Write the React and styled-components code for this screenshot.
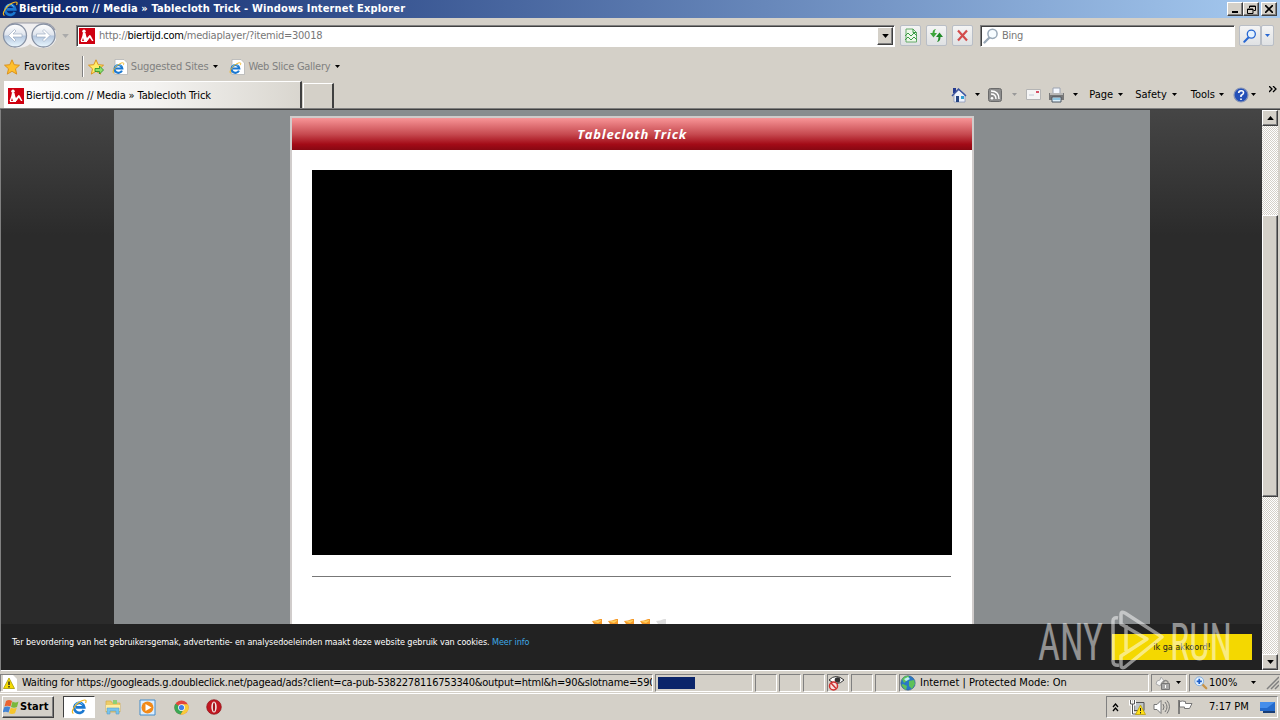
import React from 'react';
import styled, { createGlobalStyle } from 'styled-components';

const face = '#d4d0c8';

// ============================================
// STYLED COMPONENTS
// ============================================
const GlobalStyle = createGlobalStyle`
  * { box-sizing: border-box; }
  body {
    margin: 0;
    overflow: hidden;
    font-family: 'DejaVu Sans Condensed', 'DejaVu Sans', sans-serif;
    font-stretch: condensed;
    font-size: 11px;
    color: #000;
  }
  svg { display: block; flex: none; }
`;

const Screen = styled.div`
  width: 1280px;
  height: 720px;
  display: flex;
  flex-direction: column;
  background: ${face};
  overflow: hidden;
`;

const Label = styled.span`
  flex: none;
  white-space: pre;
  line-height: 14px;
  font-size: ${(p) => p.$size || 11}px;
  letter-spacing: ${(p) => p.$spacing || 0}px;
  color: ${(p) => p.$color || 'inherit'};
  margin-left: ${(p) => p.$left || 0}px;
  font-weight: ${(p) => (p.$bold ? 700 : 400)};
`;

const TitleBar = styled.header`
  height: 18px;
  flex: none;
  display: flex;
  align-items: center;
  padding: 0 3px 0 2px;
  color: #fff;
  background: linear-gradient(90deg, #0a246a, #a6caf0);
`;

const Caption = styled.div`
  margin-left: auto;
  display: flex;
`;

const CaptionButton = styled.span`
  width: 16px;
  height: 14px;
  display: grid;
  place-items: center;
  margin-left: ${(p) => p.$gap || 0}px;
  background: ${face};
  border: 1px solid;
  border-color: #fff #404040 #404040 #fff;
  box-shadow: inset -1px -1px #808080;
`;

const AddressRow = styled.div`
  height: 35px;
  flex: none;
  display: flex;
  align-items: center;
  padding: 0 6px 0 2px;
`;

const Field = styled.div`
  height: 22px;
  width: ${(p) => p.$width}px;
  margin-left: ${(p) => p.$left}px;
  display: flex;
  align-items: center;
  background: #fff;
  border: 1px solid;
  border-color: #808080 #fff #fff #808080;
  box-shadow: inset 1px 1px #404040;
  padding: 1px 1px 1px 2px;
`;

const DropButton = styled.span`
  width: 16px;
  height: 18px;
  margin-left: auto;
  display: grid;
  place-items: center;
  background: ${face};
  border: 1px solid;
  border-color: #fff #404040 #404040 #fff;
  box-shadow: inset -1px -1px #808080;
`;

const ToolButton = styled.span`
  width: ${(p) => p.$width || 21}px;
  height: 21px;
  margin-left: ${(p) => p.$left || 0}px;
  display: grid;
  place-items: center;
  background: linear-gradient(#f4f4f4, #dfe1e3);
  border: 1px solid #b9bec6;
  border-radius: 2px;
`;

const FavoritesRow = styled.div`
  height: 27px;
  flex: none;
  display: flex;
  align-items: center;
  padding-left: 4px;
`;

const Divider = styled.span`
  width: 2px;
  height: 21px;
  margin: 0 4px 0 12px;
  border-left: 1px solid #808080;
  border-right: 1px solid #fff;
`;

const TabRow = styled.div`
  height: 29px;
  flex: none;
  display: flex;
  align-items: flex-end;
  padding-left: 4px;
  border-bottom: 1px solid #808080;
`;

const Tab = styled.div`
  width: ${(p) => p.$width}px;
  height: ${(p) => p.$height}px;
  display: flex;
  align-items: center;
  padding: 2px 0 0 3px;
  margin-right: 1px;
  background: ${(p) => (p.$active ? 'linear-gradient(90deg, #fff, #f4f3f1 50%, #d9d6cf)' : face)};
  border: 1px solid #fff;
  border-bottom: none;
  border-right: 2px solid #404040;
`;

const CommandBar = styled.div`
  flex: 1;
  align-self: stretch;
  display: flex;
  align-items: center;
  justify-content: flex-end;
  padding: 1px 3px 0 0;
`;

const Gap = styled.span`
  flex: none;
  width: ${(p) => p.$width}px;
`;

const Viewport = styled.div`
  height: 562px;
  flex: none;
  display: flex;
  border-left: 1px solid #808080;
  border-top: 1px solid #404040;
  border-bottom: 1px solid #fff;
`;

const Page = styled.main`
  width: 1261px;
  display: flex;
  flex-direction: column;
  background: linear-gradient(#454545, #2b2b2b 125px);
`;

const Backdrop = styled.div`
  width: 1036px;
  height: 514px;
  margin-left: 113px;
  padding: 6px 0 0 176px;
  background: #898d8f;
`;

const Player = styled.section`
  width: 684px;
  height: 508px;
  display: flex;
  flex-direction: column;
  align-items: center;
  background: #fff;
  border: 2px solid #d0cccb;
  border-bottom: none;
`;

const PlayerTitle = styled.h1`
  align-self: stretch;
  height: 32px;
  margin: 0 0 20px;
  text-align: center;
  color: #fff;
  font: italic 700 13px/32px 'Open Sans', sans-serif;
  letter-spacing: 0.75px;
  background: linear-gradient(#f89597, #c74b51 50%, #a30b17 82%, #870812);
`;

const Video = styled.div`
  width: 640px;
  height: 385px;
  background: #000;
`;

const Rule = styled.div`
  width: 639px;
  height: 1px;
  margin: 21px 1px 42px 0;
  background: #777;
`;

const Stars = styled.div`
  display: flex;
  gap: 4px;
  height: 5px;
  margin-left: -6px;
  overflow: hidden;
`;

const CookieBar = styled.footer`
  flex: 1;
  display: flex;
  align-items: flex-start;
  padding: 10px 10px 0 11px;
  background: #222;
  color: #fff;
`;

const CookieText = styled.p`
  margin: 1px 0 0;
  line-height: 14px;
  font-size: 9px;
  letter-spacing: -0.08px;
  white-space: pre;
`;

const MoreInfo = styled.a`
  color: #3fa9e5;
`;

const AcceptButton = styled.span`
  width: 140px;
  height: 26px;
  margin-left: auto;
  display: grid;
  place-items: center;
  color: #222;
  background: #f4d800;
`;

const ScrollBar = styled.div`
  width: 16px;
  display: flex;
  flex-direction: column;
  background: repeating-conic-gradient(#fff 0 25%, ${face} 0 50%) 0 0 / 2px 2px;
`;

const ScrollPart = styled.span`
  height: ${(p) => p.$height}px;
  flex: none;
  display: grid;
  place-items: center;
  background: ${face};
  border: 1px solid;
  border-color: #fff #404040 #404040 #fff;
  box-shadow: inset -1px -1px #808080;
`;

const TrackSpace = styled.span`
  flex: ${(p) => p.$grow} 0 0;
`;

const StatusBar = styled.div`
  height: 23px;
  flex: none;
  display: flex;
  align-items: center;
  padding: 2px 0 1px;
  border-bottom: 1px solid #fff;
`;

const StatusCell = styled.div`
  width: ${(p) => p.$width}px;
  height: 18px;
  flex: none;
  display: flex;
  align-items: center;
  margin-right: ${(p) => p.$right ?? 2}px;
  padding-left: ${(p) => p.$pad ?? 2}px;
  overflow: hidden;
  border: 1px solid;
  border-color: #808080 #fff #fff #808080;
`;

const Progress = styled.span`
  width: 37px;
  height: 12px;
  background: #0a246a;
`;

const TaskBar = styled.div`
  flex: 1;
  display: flex;
  align-items: center;
  padding: 1px 0 1px 2px;
`;

const StartButton = styled.div`
  width: 52px;
  height: 22px;
  display: flex;
  align-items: center;
  border: 1px solid;
  border-color: #fff #404040 #404040 #fff;
  box-shadow: inset -1px -1px #808080;
`;

const TaskItem = styled.div`
  width: 32px;
  height: 22px;
  margin-left: ${(p) => p.$left || 2}px;
  display: grid;
  place-items: center;
  background: ${(p) => (p.$active ? '#fff' : 'transparent')};
  border: 1px solid;
  border-color: ${(p) => (p.$active ? '#404040 #fff #fff #404040' : 'transparent')};
`;

const Tray = styled.div`
  width: 172px;
  height: 22px;
  margin: 0 2px 0 auto;
  display: flex;
  align-items: center;
  padding-left: 5px;
  border: 1px solid;
  border-color: #808080 #fff #fff #808080;
`;

const Watermark = styled.div`
  position: absolute;
  left: 1038px;
  top: 608px;
  opacity: 0.5;
`;

const WatermarkText = styled.text`
  font-family: Roboto, sans-serif;
  font-size: 52px;
  fill: #fff;
`;

// ============================================
// ICONS
// ============================================
const Arrow = ({ color = '#000', up, size = 5 }) => (
  <svg width={size} height={(size + 1) / 2} viewBox="0 0 10 6">
    <path d={up ? 'M0 6 5 0l5 6z' : 'M0 0h10L5 6z'} fill={color} />
  </svg>
);

const IeIcon = ({ size = 16, page }) => (
  <svg width={size} height={size} viewBox="0 0 16 16">
    {page && <path d="M3 .5h9l3.500 3.500v11.500H3z" fill="#fff" stroke="#b4b4b4" strokeWidth=".8" />}
    <g transform={page ? 'translate(0 3) scale(.78)' : undefined}>
      <path d="M12.800 11A5 5 0 1 1 13.200 8.300H5" fill="none" stroke="#1b78d0" strokeWidth="2.700" />
      <path d="M11.500 5.500A4 4 0 0 0 4 6.500" fill="none" stroke="#6fc4f7" strokeWidth="1" />
      <path d="M2.500 14.500C-1 13.500 4 4.500 11.500 1.500c4-1.500 4 .5 3 2.500" fill="none" stroke="#f0b51e" strokeWidth="1.200" />
    </g>
  </svg>
);

const SiteIcon = () => (
  <svg width="16" height="16" viewBox="0 0 16 16">
    <path d="M0 0h16v16H0z" fill="#cf0010" />
    <circle cx="5" cy="3.300" r="1.700" fill="#fff" />
    <path d="M4 4.500 6.500 5l.8 3.500L8 10l2.500-3 1.200.5 2.800 5.500h-1.500l-2.200-3.300L8.500 13H5l-1-3-1 3H1.500l1.800-5z" fill="#fff" />
    <path d="M2 13.500h6" stroke="#fff" />
  </svg>
);

const NavButtons = () => (
  <svg width="56" height="27" viewBox="0 0 56 27">
    <defs>
      <linearGradient id="orb" x2="0" y2="1">
        <stop stopColor="#fff" />
        <stop offset=".48" stopColor="#dfe4ed" />
        <stop offset=".52" stopColor="#b4c6de" />
        <stop offset="1" stopColor="#eaf8ff" />
      </linearGradient>
    </defs>
    <path d="M2 10Q5 1 13 1h29q9 0 12 9v8q-4 8-12 8-10 0-14-4-4 4-14 4-8 0-12-8z" fill="#f0eff0" />
    <path d="M3 8Q7 1 13 1h29q7 0 11 7" fill="none" stroke="#999ba8" strokeWidth="1.200" />
    <circle cx="13" cy="13.500" r="11.500" fill="url(#orb)" stroke="#8791a3" strokeWidth="1.300" />
    <circle cx="41.500" cy="13.500" r="11.500" fill="url(#orb)" stroke="#8791a3" strokeWidth="1.300" />
    <path d="m12.500 7.500-6 6 6 6 1.500-1.500-3-3h9v-3h-9l3-3zM42 7.500l6 6-6 6-1.500-1.500 3-3h-9v-3h9l-3-3z" fill="#fff" stroke="#92a2ba" strokeWidth=".6" />
  </svg>
);

const StarIcon = ({ add }) => (
  <svg width="16" height="16" viewBox="0 0 16 16">
    <path d="m8 .8 2.200 4.900 5.300.5-4 3.600 1.200 5.300L8 12.300l-4.700 2.800 1.200-5.300-4-3.600 5.300-.5z" fill={add ? '#ffec68' : '#ffc02d'} stroke="#d98c13" strokeWidth=".9" />
    {add && <path d="M7 9.500h4.500V7l4 4-4 4v-2.500H7z" fill="#8ee06c" stroke="#278d25" strokeWidth=".8" />}
  </svg>
);

const RatingStar = ({ gray }) => (
  <svg width="12" height="5" viewBox="0 0 12 5">
    <path d="M1 2 5 1.500 9 0h2v5H3z" fill={gray ? '#ddd' : '#f59a2a'} />
    {!gray && <path d="M2 2.500 10 1v1L7 4z" fill="#ffd05b" />}
  </svg>
);

const Lens = ({ color = '#2767d2', fill = '#e4f2ff', size = 16, plus }) => (
  <svg width={size} height={size} viewBox="0 0 16 16">
    {plus ? (
      <g>
        <path d="m9 9 5 5" stroke="#c89347" strokeWidth="2.600" strokeLinecap="round" />
        <circle cx="6" cy="6" r="5" fill={fill} stroke="#78a8e0" />
        <path d="M6 3v6M3 6h6" stroke="#1d5ec8" strokeWidth="2" />
      </g>
    ) : (
      <g>
        <path d="m6.500 9.500-5 5" stroke={color} strokeWidth="2.300" strokeLinecap="round" />
        <circle cx="9.500" cy="5.800" r="4.600" fill={fill} stroke={color} strokeWidth="1.500" />
      </g>
    )}
  </svg>
);

const CompatIcon = () => (
  <svg width="14" height="15" viewBox="0 0 14 15">
    <path d="M2 1h7l3.500 3.500V14H2z" fill="#edf7e9" stroke="#64aa68" />
    <path d="M9 1v3.500h3.500M1 8l3-3 3 3 3-3 3 3M1 12l3-3 3 3 3-3 3 3" fill="none" stroke="#3b9b46" />
  </svg>
);

const RefreshIcon = () => (
  <svg width="15" height="15" viewBox="0 0 15 15">
    <path d="M7 1Q3.500 1.500 3.500 5H1l3.500 4.500L8 5H5.500q0-2.500 1.500-4z" fill="#3da63a" />
    <path d="M8 14q3.500-.5 3.500-5H14l-3.500-4.500L7 9h2.500q0 3-1.500 5z" fill="#218a28" />
  </svg>
);

const StopIcon = () => (
  <svg width="13" height="13" viewBox="0 0 13 13">
    <path d="m2 1.500 9 10m0-10-9 10" stroke="#d34b4b" strokeWidth="2.200" />
  </svg>
);

const HomeIcon = () => (
  <svg width="16" height="16" viewBox="0 0 16 16">
    <path d="M3 7v8h11V7L8 3z" fill="#eef2fa" stroke="#8290b5" strokeWidth=".7" />
    <path d="M2 1h3v5H2z" fill="#253b90" />
    <path d="m1 9 6.500-7L15 9" fill="none" stroke="#3c549f" strokeWidth="1.500" />
    <path d="M5 9h3v6H5z" fill="#254482" />
    <path d="M10 9h3v3h-3z" fill="#329ed2" />
  </svg>
);

const FeedIcon = () => (
  <svg width="14" height="14" viewBox="0 0 14 14">
    <rect x=".5" y=".5" width="13" height="13" rx="2" fill="#8d8d8d" stroke="#6b6b6b" />
    <circle cx="4" cy="10.300" r="1.300" fill="#fff" />
    <path d="M3 6q5 0 5 5M3 3q8 0 8 8" fill="none" stroke="#fff" strokeWidth="1.400" />
  </svg>
);

const MailIcon = () => (
  <svg width="15" height="11" viewBox="0 0 15 11">
    <path d="M.5.5h14v10H.5z" fill="#f5f5f5" stroke="#b4b4b4" />
    <path d="M10 2h3v2h-3z" fill="#d65268" />
    <path d="M3 6h5" stroke="#c1c8d4" />
  </svg>
);

const PrinterIcon = () => (
  <svg width="17" height="16" viewBox="0 0 17 16">
    <path d="M5 1h7v6H5z" fill="#f4f8ff" stroke="#9ba2b0" />
    <path d="M1 6h15v7H1z" fill="#777" />
    <path d="M2 6h13v2H2z" fill="#b8b8b8" />
    <path d="M4 10h9v5H4z" fill="#dff1fb" stroke="#4d5663" />
    <path d="M5 12h7" stroke="#3e9ccb" />
  </svg>
);

const HelpIcon = () => (
  <svg width="16" height="16" viewBox="0 0 16 16">
    <circle cx="8" cy="8" r="7" fill="#2450b8" stroke="#8794b5" strokeWidth="1.200" />
    <path d="M5.700 6q0-2.300 2.500-2.300T10.500 6Q10.500 7 8 8.500V10m0 1.500v1.500" fill="none" stroke="#fff" strokeWidth="1.600" />
  </svg>
);

const WarningIcon = () => (
  <svg width="16" height="16" viewBox="0 0 16 16">
    <path d="M1 0h10l4 4v12H1z" fill="#fff" />
    <path d="M7 3 12.500 13.500h-11z" fill="#f7dc00" stroke="#a79a00" strokeWidth=".8" />
    <path d="M7 6.500v3.500m0 1v1.500" stroke="#222" strokeWidth="1.400" />
  </svg>
);

const EyeIcon = () => (
  <svg width="17" height="16" viewBox="0 0 17 16">
    <path d="M1 5q7-7 15 0-7 7-15 0z" fill="#fff" stroke="#333" />
    <circle cx="9.500" cy="5" r="2.800" fill="#333" />
    <circle cx="5.500" cy="11" r="4" fill="#f7dede" stroke="#cf3030" strokeWidth="1.500" />
    <path d="m3 8 5 5.500" stroke="#cf3030" strokeWidth="1.500" />
  </svg>
);

const GlobeIcon = () => (
  <svg width="16" height="16" viewBox="0 0 16 16">
    <circle cx="8" cy="8" r="7.200" fill="#2878c5" stroke="#34577e" strokeWidth=".6" />
    <path d="M2 4q3-4 7-3l-1 4-4 3zM9 6l5-1 1 4-3 5-3-3zM3 9l4 2-1 4Q3 13 1.500 10z" fill="#5dc158" />
    <path d="m4 4 4-2 2 2-4 2z" fill="#bceef8" />
  </svg>
);

const LockIcon = () => (
  <svg width="16" height="16" viewBox="0 0 16 16">
    <path d="M1 9q0-4 4-4l1-3 4 5H7l-2 4z" fill="#f4f4f4" stroke="#aaa" />
    <path d="M8 9V7q2.500-3 5 0v2" fill="none" stroke="#888" strokeWidth="1.300" />
    <path d="M6.500 8.500h8v6h-8z" fill="#a9a9a9" stroke="#777" />
    <path d="M10.500 10v3" stroke="#fff" />
  </svg>
);

const WindowsIcon = () => (
  <svg width="17" height="16" viewBox="0 0 17 16">
    <path d="M3 2q3-2 6 0L7.500 7.500Q4 6 1.500 7.500z" fill="#eb6330" />
    <path d="M9.500 2.500q3 2 6 0l-1.500 5.500q-3 1.500-6 0z" fill="#7ab83e" />
    <path d="M1.200 8.200q3-1.500 6 0L5.500 13.500q-3-1.500-6 0z" fill="#4384d4" />
    <path d="M7.800 8.700q3 1.500 6 0L12 14.200q-3 1.500-6 0z" fill="#f6c52c" />
  </svg>
);

const FolderIcon = () => (
  <svg width="18" height="16" viewBox="0 0 18 16">
    <path d="M2 2h5l1 2h8v9H2z" fill="#edcc69" stroke="#d4ad45" strokeWidth=".7" />
    <path d="M9 1h4v4H9z" fill="#8ecf75" />
    <path d="M2 6h14v6H2z" fill="#ffeda0" />
    <path d="M3 15V9h12v6h-3v-3H6v3z" fill="#78c4ed" stroke="#5d9dca" strokeWidth=".6" />
  </svg>
);

const MediaIcon = () => (
  <svg width="17" height="17" viewBox="0 0 17 17">
    <path d="M1 1h15v15H1z" fill="#dceeff" stroke="#428ccb" />
    <circle cx="8.500" cy="8.500" r="6" fill="#f28a19" />
    <path d="m6.500 5 6 3.500-6 3.500z" fill="#fff" />
  </svg>
);

const ChromeIcon = () => (
  <svg width="15" height="15" viewBox="0 0 16 16">
    <circle cx="8" cy="8" r="7.500" fill="#e3453c" />
    <path d="M8 8 1.500 4A7.500 7.500 0 0 0 7 15.500L11 9z" fill="#3ba755" />
    <path d="M8 4.500h6.700A7.500 7.500 0 0 1 7 15.500L11 9z" fill="#f8cb39" />
    <circle cx="8" cy="8" r="3.600" fill="#fff" />
    <circle cx="8" cy="8" r="2.800" fill="#427ee8" />
  </svg>
);

const OperaIcon = () => (
  <svg width="16" height="16" viewBox="0 0 16 16">
    <circle cx="8" cy="8" r="7.300" fill="#c21721" stroke="#8d1117" strokeWidth=".7" />
    <ellipse cx="8" cy="8" rx="2.700" ry="5.500" fill="#f3e9e6" />
    <ellipse cx="8" cy="8" rx="1.100" ry="4.500" fill="#a3131b" />
  </svg>
);

const NetworkIcon = () => (
  <svg width="17" height="16" viewBox="0 0 17 16">
    <path d="M5 3.500h10v8H5z" fill="#bfc5c8" stroke="#555" />
    <path d="M1.500 1v4h4V1M3.500 5v10h7" fill="none" stroke="#fff" strokeWidth="3" />
    <path d="M1.500 1v4h4V1M3.500 5v10h7" fill="none" stroke="#555" />
    <path d="m11.500 6 5 9.500h-10z" fill="#ffdf15" stroke="#b49800" strokeWidth=".7" />
    <path d="M11.500 9v3m0 1v1.500" stroke="#222" />
  </svg>
);

const VolumeIcon = () => (
  <svg width="17" height="16" viewBox="0 0 17 16">
    <path d="M1 5.500h3l4-4v13l-4-4H1z" fill="#fff" stroke="#777" />
    <path d="M10 5q2 3 0 6M12 3q4 5 0 10M14 1.500q5 6 0 13" fill="none" stroke="#777" />
  </svg>
);

const FlagIcon = () => (
  <svg width="16" height="16" viewBox="0 0 16 16">
    <path d="M2.500 2.500q3-1 6 0v2h6.500l-2.500 5H7.500V8h-5z" fill="#fff" stroke="#777" />
    <path d="M2 1v14" stroke="#666" strokeWidth="1.500" />
  </svg>
);

// ============================================
// SECTIONS
// ============================================
const BrowserChrome = () => (
  <>
    <TitleBar>
      <IeIcon />
      <Label $bold $left={1} $spacing={0.145}>Biertijd.com // Media » Tablecloth Trick - Windows Internet Explorer</Label>
      <Caption>
        <CaptionButton><svg width="8" height="8"><path d="M1 6h6v2H1z" /></svg></CaptionButton>
        <CaptionButton><svg width="9" height="9" viewBox="0 0 9 9"><path d="M2.500 3V1h6v4.500H6.500M.5 4h5.500v4.500H.5zM.5 4.500h5.500M2.500 1.500h6" fill="none" stroke="#000" /></svg></CaptionButton>
        <CaptionButton $gap={2}><svg width="8" height="8"><path d="m0 0 8 8m0-8-8 8" stroke="#000" strokeWidth="1.600" /></svg></CaptionButton>
      </Caption>
    </TitleBar>
    <AddressRow>
      <NavButtons />
      <Gap $width={4} />
      <Arrow color="#aaa" size={7} />
      <Field $left={7} $width={819}>
        <SiteIcon />
        <Label $left={4} $spacing={-0.25} $color="#777">http://<Label $spacing={-0.25} $color="#000">biertijd.com</Label>/mediaplayer/?itemid=30018</Label>
        <DropButton><Arrow size={7} /></DropButton>
      </Field>
      <ToolButton $left={5}><CompatIcon /></ToolButton>
      <ToolButton $left={5}><RefreshIcon /></ToolButton>
      <ToolButton $left={5}><StopIcon /></ToolButton>
      <Field $left={7} $width={255}>
        <Lens color="#9aa9b8" fill="#f7fcff" />
        <Label $left={3} $spacing={-0.3} $color="#777">Bing</Label>
      </Field>
      <ToolButton $left={4} $width={22}><Lens size={14} /></ToolButton>
      <ToolButton $width={13}><Arrow color="#2767d2" /></ToolButton>
    </AddressRow>
    <FavoritesRow>
      <StarIcon />
      <Label $left={4} $spacing={0.14}>Favorites</Label>
      <Divider />
      <StarIcon add />
      <Gap $width={8} />
      <IeIcon page />
      <Label $left={3} $spacing={-0.16} $color="#808080">Suggested Sites</Label>
      <Gap $width={5} /><Arrow />
      <Gap $width={11} />
      <IeIcon page />
      <Label $left={3} $spacing={-0.26} $color="#808080">Web Slice Gallery</Label>
      <Gap $width={5} /><Arrow />
    </FavoritesRow>
    <TabRow>
      <Tab $active $width={298} $height={27}>
        <SiteIcon />
        <Label $left={2} $spacing={-0.13}>Biertijd.com // Media » Tablecloth Trick</Label>
      </Tab>
      <Tab $width={31} $height={25} />
      <CommandBar>
        <HomeIcon /><Gap $width={8} /><Arrow />
        <Gap $width={8} /><FeedIcon /><Gap $width={10} /><Arrow color="#999" />
        <Gap $width={9} /><MailIcon />
        <Gap $width={7} /><PrinterIcon /><Gap $width={8} /><Arrow />
        <Label $left={11}>Page</Label><Gap $width={5} /><Arrow />
        <Label $left={12}>Safety</Label><Gap $width={5} /><Arrow />
        <Label $left={14}>Tools</Label><Gap $width={4} /><Arrow />
        <Gap $width={9} /><HelpIcon /><Gap $width={2} /><Arrow />
        <Gap $width={13} />
        <svg width="8" height="18" viewBox="0 0 8 18"><path d="m0 0 3 3-3 3m4-6 3 3-3 3" fill="none" stroke="#000" strokeWidth="1.300" /></svg>
      </CommandBar>
    </TabRow>
  </>
);

const WebPage = () => (
  <Viewport>
    <Page>
      <Backdrop>
        <Player>
          <PlayerTitle>Tablecloth Trick</PlayerTitle>
          <Video />
          <Rule />
          <Stars>
            <RatingStar /><RatingStar /><RatingStar /><RatingStar /><RatingStar gray />
          </Stars>
        </Player>
      </Backdrop>
      <CookieBar>
        <CookieText>
          Ter bevordering van het gebruikersgemak, advertentie- en analysedoeleinden maakt deze website gebruik van cookies. <MoreInfo>Meer info</MoreInfo>
        </CookieText>
        <AcceptButton><Label $size={9}>ik ga akkoord!</Label></AcceptButton>
      </CookieBar>
    </Page>
    <ScrollBar>
      <ScrollPart $height={16}><Arrow up size={7} /></ScrollPart>
      <TrackSpace $grow={89} />
      <ScrollPart $height={282} />
      <TrackSpace $grow={157} />
      <ScrollPart $height={16}><Arrow size={7} /></ScrollPart>
    </ScrollBar>
  </Viewport>
);

const BottomBars = () => (
  <>
    <StatusBar>
      <StatusCell $width={653} $pad={1}>
        <WarningIcon />
        <Label $left={4} $spacing={-0.21}>Waiting for https://googleads.g.doubleclick.net/pagead/ads?client=ca-pub-5382278116753340&amp;output=html&amp;h=90&amp;slotname=590</Label>
      </StatusCell>
      <StatusCell $width={98}><Progress /></StatusCell>
      <StatusCell $width={22} />
      <StatusCell $width={22} />
      <StatusCell $width={22} />
      <StatusCell $width={22} $pad={0}><EyeIcon /></StatusCell>
      <StatusCell $width={22} />
      <StatusCell $width={22} />
      <StatusCell $width={250} $pad={0}>
        <GlobeIcon />
        <Label $left={4}>Internet | Protected Mode: On</Label>
      </StatusCell>
      <StatusCell $width={36} $pad={3}><LockIcon /><Gap $width={5} /><Arrow /></StatusCell>
      <StatusCell $width={92} $right={0} $pad={4}>
        <Lens plus size={14} />
        <Label $left={1}>100%</Label>
        <Gap $width={14} /><Arrow />
        <Gap $width={10} />
        <svg width="13" height="14"><path d="M1 13 13 1M5 13l8-8M9 13l4-4" stroke="#808080" strokeWidth="1.500" /></svg>
      </StatusCell>
    </StatusBar>
    <TaskBar>
      <StartButton><WindowsIcon /><Label $bold $spacing={0.1}>Start</Label></StartButton>
      <TaskItem $active $left={9}><IeIcon /></TaskItem>
      <TaskItem><FolderIcon /></TaskItem>
      <TaskItem><MediaIcon /></TaskItem>
      <TaskItem><ChromeIcon /></TaskItem>
      <TaskItem $left={1}><OperaIcon /></TaskItem>
      <Tray>
        <svg width="7" height="9" viewBox="0 0 7 9"><path d="m1 4 2.500-3L6 4M1 8l2.500-3L6 8" fill="none" stroke="#000" strokeWidth="1.300" /></svg>
        <Gap $width={10} /><NetworkIcon />
        <Gap $width={7} /><VolumeIcon />
        <Gap $width={7} /><FlagIcon />
        <Label $left={16}>7:17 PM</Label>
        <Gap $width={11} />
        <svg width="15" height="14"><path d="M0 2h15v9H0z" fill="#246acc" /><path d="M0 2h15L7 8H0z" fill="#458eeb" /><path d="M3 11h12v2H3z" fill="#183d76" /></svg>
      </Tray>
    </TaskBar>
  </>
);

const App = () => (
  <Screen>
    <GlobalStyle />
    <BrowserChrome />
    <WebPage />
    <BottomBars />
    <Watermark>
      <svg width="200" height="66" viewBox="0 0 200 66">
        <WatermarkText x="0" y="52" textLength="65" lengthAdjust="spacingAndGlyphs">ANY</WatermarkText>
        <WatermarkText x="132" y="52" textLength="62" lengthAdjust="spacingAndGlyphs">RUN</WatermarkText>
        <path d="M80 10q-5-1-5 3v40q0 5 6 4M83 6q0-3 4-1l37 24-37 30q-4 2-4-2V48l26-17-26-15zM88 17v26" fill="none" stroke="#fff" strokeWidth="3.500" strokeLinejoin="round" />
      </svg>
    </Watermark>
  </Screen>
);

export default App;
